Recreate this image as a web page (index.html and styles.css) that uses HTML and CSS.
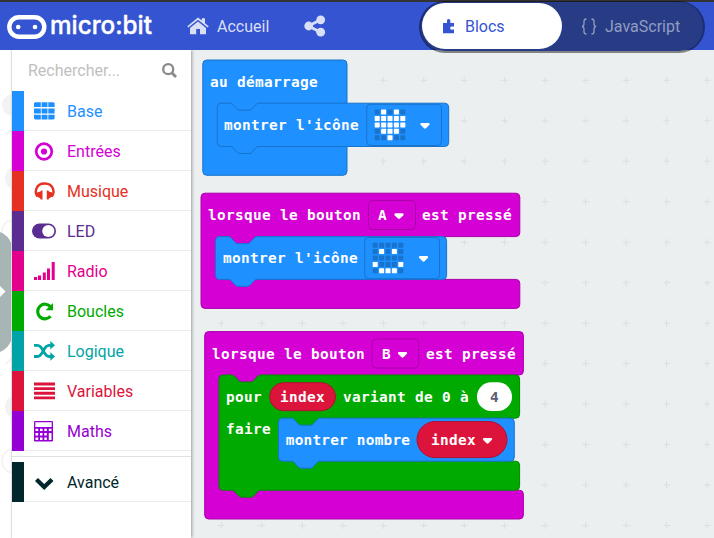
FILE: index.html
```html
<!DOCTYPE html>
<html lang="fr">
<head>
<meta charset="utf-8">
<title>micro:bit</title>
<link rel="stylesheet" href="styles.css">
</head>
<body>
<header class="topbar">
  <div class="brand">
    <svg class="brand-mark" width="40" height="24" viewBox="0 0 40 24"><rect x="2.300" y="2.300" width="35" height="19.400" rx="9.700" fill="none" stroke="#fff" stroke-width="4.400"/><circle cx="11.200" cy="12" r="2.300" fill="#fff"/><circle cx="28" cy="12" r="2.300" fill="#fff"/></svg>
    <svg class="brand-name" width="108" height="40" viewBox="0 0 108 40"><text x="0" y="28.500" textLength="102" lengthAdjust="spacingAndGlyphs">micro:bit</text></svg>
  </div>
  <a class="home">
    <svg width="22" height="18" viewBox="0 0 22 18" fill="currentColor"><path d="M11 4.600 19 11v6.300h-6V12H9.200v5.300H3V11z"/><path d="M11 .5 14.800 3.600V1.300h3.200V6.200L21.700 9.200 20.700 10.500 11 2.700 1.300 10.500.300 9.200z"/></svg>
    <span>Accueil</span>
  </a>
  <svg class="share" width="22" height="22" viewBox="0 0 22 22" fill="currentColor"><path d="M4.500 11 16.500 4.700M4.500 11 16.500 17.300" stroke="currentColor" stroke-width="2.800"/><circle cx="4.700" cy="11" r="4.400"/><circle cx="16.700" cy="4.800" r="4.400"/><circle cx="16.700" cy="17.200" r="4.400"/></svg>
  <div class="toggle">
    <div class="tab tab-on">
      <svg width="12" height="15" viewBox="0 0 12 15" fill="currentColor"><path d="M0 4h4V2.600a1.800 1.800 0 1 1 3.300 0V4H11v3.600H9.600a1.700 1.700 0 1 0 0 3H11V14.300H0z"/></svg>
      <span>Blocs</span>
    </div>
    <div class="tab tab-off">
      <svg width="16" height="17" viewBox="0 0 16 17" fill="none" stroke="currentColor" stroke-width="1.300"><path d="M5.500 1C3.500 1 3 1.800 3 3.300v2.500C3 7.600 2.400 8.300 1 8.500 2.400 8.700 3 9.400 3 11.200v2.500C3 15.200 3.500 16 5.500 16M10.500 1c2 0 2.500.8 2.500 2.300v2.500c0 1.800.6 2.500 2 2.700-1.400.2-2 .9-2 2.700v2.500c0 1.500-.5 2.300-2.500 2.300"/></svg>
      <span>JavaScript</span>
    </div>
  </div>
</header>
<main class="editor">
  <aside class="rail">
    <svg width="12" height="488" viewBox="0 50 12 488">
      <g fill="#f3f3f3"><circle cx="13" cy="105" r="11"/><circle cx="17" cy="178" r="12"/><circle cx="17" cy="407" r="12"/></g>
      <g fill="none" stroke="#f1f1f1" stroke-width="1.500"><circle cx="13" cy="231" r="11"/><circle cx="14" cy="461" r="12"/><path d="M6 135l6-6M6 364l6-6"/></g>
      <path d="M0 232Q12 237 12 250V334Q12 347 0 352z" fill="#a7b5b5"/>
      <path d="M0 286 5.500 291.500 0 297z" fill="#fff"/>
    </svg>
  </aside>
  <nav class="toolbox">
    <div class="search"><span>Rechercher...</span>
      <svg width="15" height="15" viewBox="0 0 15 15" fill="none" stroke="#8a8a8a"><circle cx="6.200" cy="6.200" r="5" stroke-width="2.300"/><path d="M9.800 9.800 14 14" stroke-width="2.800"/></svg>
    </div>
    <div class="row base"><svg width="26" height="24" viewBox="0 0 26 24" fill="currentColor"><path d="M4 3.300h5.800v4.800H3V4.300zM10.600 3.300h5.900v4.800h-5.900zM17.300 3.300h5.300l1 1v3.800h-6.300zM3 9.500h6.800v4.900H3zM10.600 9.500h5.900v4.900h-5.900zM17.300 9.500h6.300v4.900h-6.300zM3 15.700h6.800v4.800H4l-1-1zM10.600 15.700h5.900v4.800h-5.900zM17.300 15.700h6.300v3.800l-1 1h-5.300z"/></svg><span>Base</span></div>
    <div class="row input"><svg width="26" height="24" viewBox="0 0 26 24"><circle cx="13" cy="12.500" r="7.800" fill="none" stroke="currentColor" stroke-width="2.700"/><circle cx="13" cy="12.500" r="3.100" fill="currentColor"/></svg><span>Entrées</span></div>
    <div class="row music"><svg width="26" height="24" viewBox="0 0 26 24"><path d="M6.500 17.500C3.500 14 4.200 4.500 13.700 4.500S23.800 14 20.800 17.500" fill="none" stroke="currentColor" stroke-width="2.400"/><path d="M11.500 11.500V20.500H9.500V19.500L6 17.500V13.500L9.500 12.500 10 11.500zM15.800 11.500V20.500H17.800V19.500L21.300 17.500V13.500L17.800 12.500 17.300 11.500z" fill="currentColor"/></svg><span>Musique</span></div>
    <div class="row led"><svg width="26" height="24" viewBox="0 0 26 24"><rect x="1" y="4.500" width="24" height="15" rx="7.500" fill="currentColor"/><circle cx="17.300" cy="12" r="6.100" fill="#fff"/></svg><span>LED</span></div>
    <div class="row radio"><svg width="26" height="24" viewBox="0 0 26 24" fill="currentColor"><path d="M3 18h3.200v3H3zM7 16.500h3.100V21H7zM11.800 13.500h3V21h-3zM16 9.500h3V21h-3zM20.700 3h3v18h-3z"/></svg><span>Radio</span></div>
    <div class="row loops"><svg width="26" height="24" viewBox="0 0 26 24"><path d="M19.700 8A7.300 7.300 0 1 0 19.500 17.300" fill="none" stroke="currentColor" stroke-width="3.200"/><path d="M22 4v7.300h-7.300z" fill="currentColor"/></svg><span>Boucles</span></div>
    <div class="row logic"><svg width="26" height="24" viewBox="0 0 26 24"><path d="M3 6.300H6.500C12.500 6.300 12 17.500 18 17.500H20M3 17.500H6.500C12.500 17.500 12 6.300 18 6.300H20" fill="none" stroke="currentColor" stroke-width="2.800"/><path d="M19.300 2 24 6.300 19.300 10.600zM19.300 13.200 24 17.500 19.300 21.800z" fill="currentColor"/></svg><span>Logique</span></div>
    <div class="row vars"><svg width="26" height="24" viewBox="0 0 26 24" fill="currentColor"><path d="M3 3.600h21v2.900H3zM3 8.200h21v2.900H3zM3 12.800h21v2.900H3zM3 17.400h21v2.900H3z"/></svg><span>Variables</span></div>
    <div class="row math"><svg width="26" height="24" viewBox="0 0 26 24"><rect x="3" y="2" width="19" height="20.500" rx="1.300" fill="currentColor"/><path d="M4.300 3.200h16.400v4.800H4.300zM4.500 9.800h2.700v2.200H4.500zM9 9.800h2.500v2.200H9zM13.300 9.800h2.500v2.200h-2.500zM17.800 9.800h2.700v2.200h-2.700zM4.500 14h2.700v2.400H4.500zM9 14h2.500v2.400H9zM13.300 14h2.500v2.400h-2.500zM17.800 14h2.700v7h-2.700zM4.500 18.500h2.700v2.400H4.500zM9 18.500h2.500v2.400H9zM13.300 18.500h2.500v2.400h-2.500z" fill="#fff"/></svg><span>Maths</span></div>
    <div class="divider"></div>
    <div class="row adv"><svg width="26" height="24" viewBox="0 0 26 24"><path d="M5.500 9.500 13.200 17 21 9.500" fill="none" stroke="currentColor" stroke-width="4.300"/></svg><span>Avancé</span></div>
  </nav>
  <svg class="workspace" width="523" height="488" viewBox="191 50 523 488">
    <defs>
      <pattern id="grid" x="504.700" y="80.300" width="40.480" height="40.480" patternUnits="userSpaceOnUse" patternTransform="translate(-20.240 -20.240)">
        <path d="M16.740 20.240h7M20.240 16.740v7" stroke="#dbdfe0" stroke-width="1"/>
      </pattern>
      <path id="caret" d="M-3.300-2.600H3.300C4.800-2.600 5-1.200 4.200-.4L1 2.700Q0 3.600-1 2.700L-4.200-.4C-5-1.200-4.800-2.600-3.300-2.600z" fill="#fff"/>
      <rect id="px" width="5" height="5" rx=".6"/>
    </defs>
    <rect x="191" y="50" width="523" height="488" fill="#ebeff0"/>
    <rect x="191" y="50" width="523" height="488" fill="url(#grid)"/>

    <g class="block-text">
      <path class="blue" d="M202.800 64a4 4 0 0 1 4-4H343a4 4 0 0 1 4 4V171.300a4 4 0 0 1-4 4H206.800a4 4 0 0 1-4-4z"/>
      <path class="blue" d="M217.300 107.200a4 4 0 0 1 4-4h8.700c1.500 0 2.500.7 3.500 1.800l3 3.400c1 1.200 2 1.800 3.500 1.800h9c1.500 0 2.500-.6 3.500-1.800l3-3.400c1-1.100 2-1.800 3.500-1.800H444.700a4 4 0 0 1 4 4V142.500a4 4 0 0 1-4 4H259c-1.500 0-2.500.7-3.500 1.800l-3 3.400c-1 1.200-2 1.800-3.500 1.800h-9c-1.500 0-2.500-.6-3.500-1.800l-3-3.400c-1-1.100-2-1.800-3.500-1.800h-8.700a4 4 0 0 1-4-4z"/>
      <text x="210" y="87">au démarrage</text>
      <text x="224" y="130">montrer l'icône</text>
      <rect class="blue" x="366.700" y="104.300" width="74.800" height="41.200" rx="4"/>
      <g id="heart"></g>
      <use href="#caret" x="425" y="125.500"/>

      <path class="pink" d="M201 197.200a4 4 0 0 1 4-4H515.800a4 4 0 0 1 4 4V232.600a4 4 0 0 1-4 4H440V279.400H515.800a4 4 0 0 1 4 4V304.400a4 4 0 0 1-4 4H205a4 4 0 0 1-4-4z"/>
      <path class="blue" d="M215.500 240.600a4 4 0 0 1 4-4h8.700c1.500 0 2.500.7 3.500 1.800l3 3.400c1 1.200 2 1.800 3.500 1.800h9c1.500 0 2.500-.6 3.500-1.800l3-3.400c1-1.100 2-1.800 3.500-1.800H442.600a4 4 0 0 1 4 4V275.400a4 4 0 0 1-4 4H257.200c-1.500 0-2.500.7-3.500 1.800l-3 3.400c-1 1.200-2 1.800-3.500 1.800h-9c-1.500 0-2.500-.6-3.500-1.800l-3-3.400c-1-1.100-2-1.800-3.500-1.800h-8.700a4 4 0 0 1-4-4z"/>
      <text x="208" y="220">lorsque le bouton</text>
      <rect class="pink" x="368.500" y="200.500" width="47" height="29" rx="4"/>
      <text x="378" y="220">A</text>
      <use href="#caret" x="399" y="215.800"/>
      <text x="422" y="220">est pressé</text>
      <text x="223" y="263">montrer l'icône</text>
      <rect class="blue" x="364.700" y="237.500" width="74.800" height="41.200" rx="4"/>
      <g id="smile"></g>
      <use href="#caret" x="423.500" y="258.500"/>

      <path class="pink" d="M204.700 335.600a4 4 0 0 1 4-4H519.400a4 4 0 0 1 4 4V371a4 4 0 0 1-4 4H510V490.200H519.400a4 4 0 0 1 4 4V515a4 4 0 0 1-4 4H208.700a4 4 0 0 1-4-4z"/>
      <path class="green" d="M219 379a4 4 0 0 1 4-4h8.700c1.500 0 2.500.7 3.500 1.800l3 3.400c1 1.200 2 1.800 3.500 1.800h9c1.500 0 2.500-.6 3.500-1.800l3-3.400c1-1.100 2-1.800 3.500-1.800H515.600a4 4 0 0 1 4 4V414.200a4 4 0 0 1-4 4H508V461.200H515.600a4 4 0 0 1 4 4V486.200a4 4 0 0 1-4 4H260.700c-1.500 0-2.500.7-3.500 1.800l-3 3.400c-1 1.200-2 1.800-3.500 1.800h-9c-1.500 0-2.500-.6-3.500-1.800l-3-3.400c-1-1.100-2-1.800-3.500-1.800h-8.700a4 4 0 0 1-4-4z"/>
      <path class="blue" d="M278.500 422.200a4 4 0 0 1 4-4h8.700c1.500 0 2.500.7 3.500 1.800l3 3.400c1 1.200 2 1.800 3.500 1.800h9c1.500 0 2.500-.6 3.500-1.800l3-3.400c1-1.100 2-1.800 3.500-1.800H510.300a4 4 0 0 1 4 4V457.200a4 4 0 0 1-4 4H320.200c-1.500 0-2.500.7-3.500 1.800l-3 3.400c-1 1.200-2 1.800-3.500 1.800h-9c-1.500 0-2.500-.6-3.500-1.800l-3-3.400c-1-1.100-2-1.800-3.500-1.800h-8.700a4 4 0 0 1-4-4z"/>
      <text x="212" y="359">lorsque le bouton</text>
      <rect class="pink" x="372" y="339" width="46.800" height="29" rx="4"/>
      <text x="382" y="359">B</text>
      <use href="#caret" x="402.500" y="354.500"/>
      <text x="426" y="359">est pressé</text>
      <text x="226" y="402">pour</text>
      <rect class="red" x="269.700" y="382.700" width="65.800" height="28" rx="14"/>
      <text x="280" y="402">index</text>
      <text x="343" y="402">variant de 0 à</text>
      <rect x="477" y="382.300" width="35" height="28.700" rx="14.300" fill="#fff"/>
      <text class="num" x="490" y="402">4</text>
      <text x="226" y="434">faire</text>
      <text x="285.800" y="445" textLength="124.500">montrer nombre</text>
      <rect class="red" x="417" y="421.600" width="90" height="36" rx="18"/>
      <text x="431" y="445">index</text>
      <use href="#caret" x="487.500" y="440.500"/>
    </g>
  </svg>
</main>
<script src="leds.js"></script>
</body>
</html>
```
FILE: styles.css
```css
* { box-sizing: border-box; }
body { margin: 0; width: 714px; height: 538px; overflow: hidden; font-family: Roboto, sans-serif; font-size: 16px; background: #fff; }
svg { display: block; flex: none; }
.topbar { position: relative; z-index: 2; display: flex; align-items: flex-start; height: 50px; background: #3454d1; border-top: 2px solid #333; color: #d9dff7; }
.brand { display: flex; padding: 13px 0 0 7px; }
.brand-name { margin: -10px -4px 0 3px; overflow: visible; }
.brand-name text { font-family: Inter, sans-serif; font-size: 25px; font-weight: 500; fill: #fff; stroke: #fff; stroke-width: .4; stroke-linejoin: round; }
.home { display: flex; align-items: center; gap: 8px; height: 48px; margin-left: 33px; width: 117px; }
.share { margin-top: 13px; }
.toggle { display: flex; width: 286px; height: 52px; margin: -1px 0 0 93px; padding: 0 0 0 1px; border: 2px solid rgba(0, 0, 0, .45); border-top-width: 1px; border-radius: 26px; background: #273c85; background-clip: padding-box; }
.tab { display: flex; align-items: center; height: 46px; margin-top: 1px; }
.tab-on { width: 140px; padding-left: 21px; gap: 10px; border-radius: 23px; background: #fff; color: #3454d1; }
.tab-off { padding-left: 19px; gap: 8px; color: #939dc2; }
.editor { display: flex; height: 488px; }
.rail { width: 12px; border-right: 1px solid #ebebeb; overflow: hidden; }
.toolbox { position: relative; z-index: 1; width: 179px; background: #fff; box-shadow: 1px 0 3px rgba(0, 0, 0, .35); }
.search { display: flex; align-items: center; justify-content: space-between; height: 41px; padding: 0 14px 0 16px; color: #bfbfbf; }
.row { display: flex; align-items: center; height: 40px; padding-left: 7px; gap: 10px; border-left: 12px solid currentColor; background: linear-gradient(#e8eced, #e8eced) left bottom / 100% 1px no-repeat; }
.row svg { width: 26px; }
.divider { height: 11px; padding-top: 5px; }
.divider::before { content: ""; display: block; height: 1px; background: #dfe2e2; }
.base { color: #1e90ff; }
.input { color: #d400d4; }
.music { color: #e63022; }
.led { color: #5c2d91; }
.radio { color: #e3008c; }
.loops { color: #00aa00; }
.logic { color: #00a4a6; }
.vars { color: #dc143c; }
.math { color: #9400d3; }
.adv { color: #00272b; }
.block-text text { font-family: "DejaVu Sans Mono", monospace; font-size: 14.4px; letter-spacing: .34px; font-weight: 700; fill: #fff; }
.block-text .num { fill: #575e75; }
.blue { fill: #1e90ff; stroke: #1873cc; }
.pink { fill: #d400d4; stroke: #aa00aa; }
.green { fill: #00aa00; stroke: #008800; }
.red { fill: #dc143c; stroke: #b01030; }
.led-on { fill: #fff; stroke: none; }
.led-off { fill: #1873cc; }
```
FILE: leds.js
```js
const drawLeds = (id, left, top, rows) => {
  const group = document.getElementById(id);
  rows.forEach((row, y) => [...row].forEach((cell, x) => {
    const led = document.createElementNS("http://www.w3.org/2000/svg", "use");
    led.setAttribute("href", "#px");
    led.setAttribute("x", left + x * 6.4);
    led.setAttribute("y", top + y * 6.4);
    led.setAttribute("class", cell === "#" ? "led-on" : "led-off");
    group.append(led);
  }));
};
drawLeds("heart", 374.700, 109.600, [".#.#.", "#####", "#####", ".###.", "..#.."]);
drawLeds("smile", 372.700, 242.700, [".....", ".#.#.", ".....", "#...#", ".###."]);
```
